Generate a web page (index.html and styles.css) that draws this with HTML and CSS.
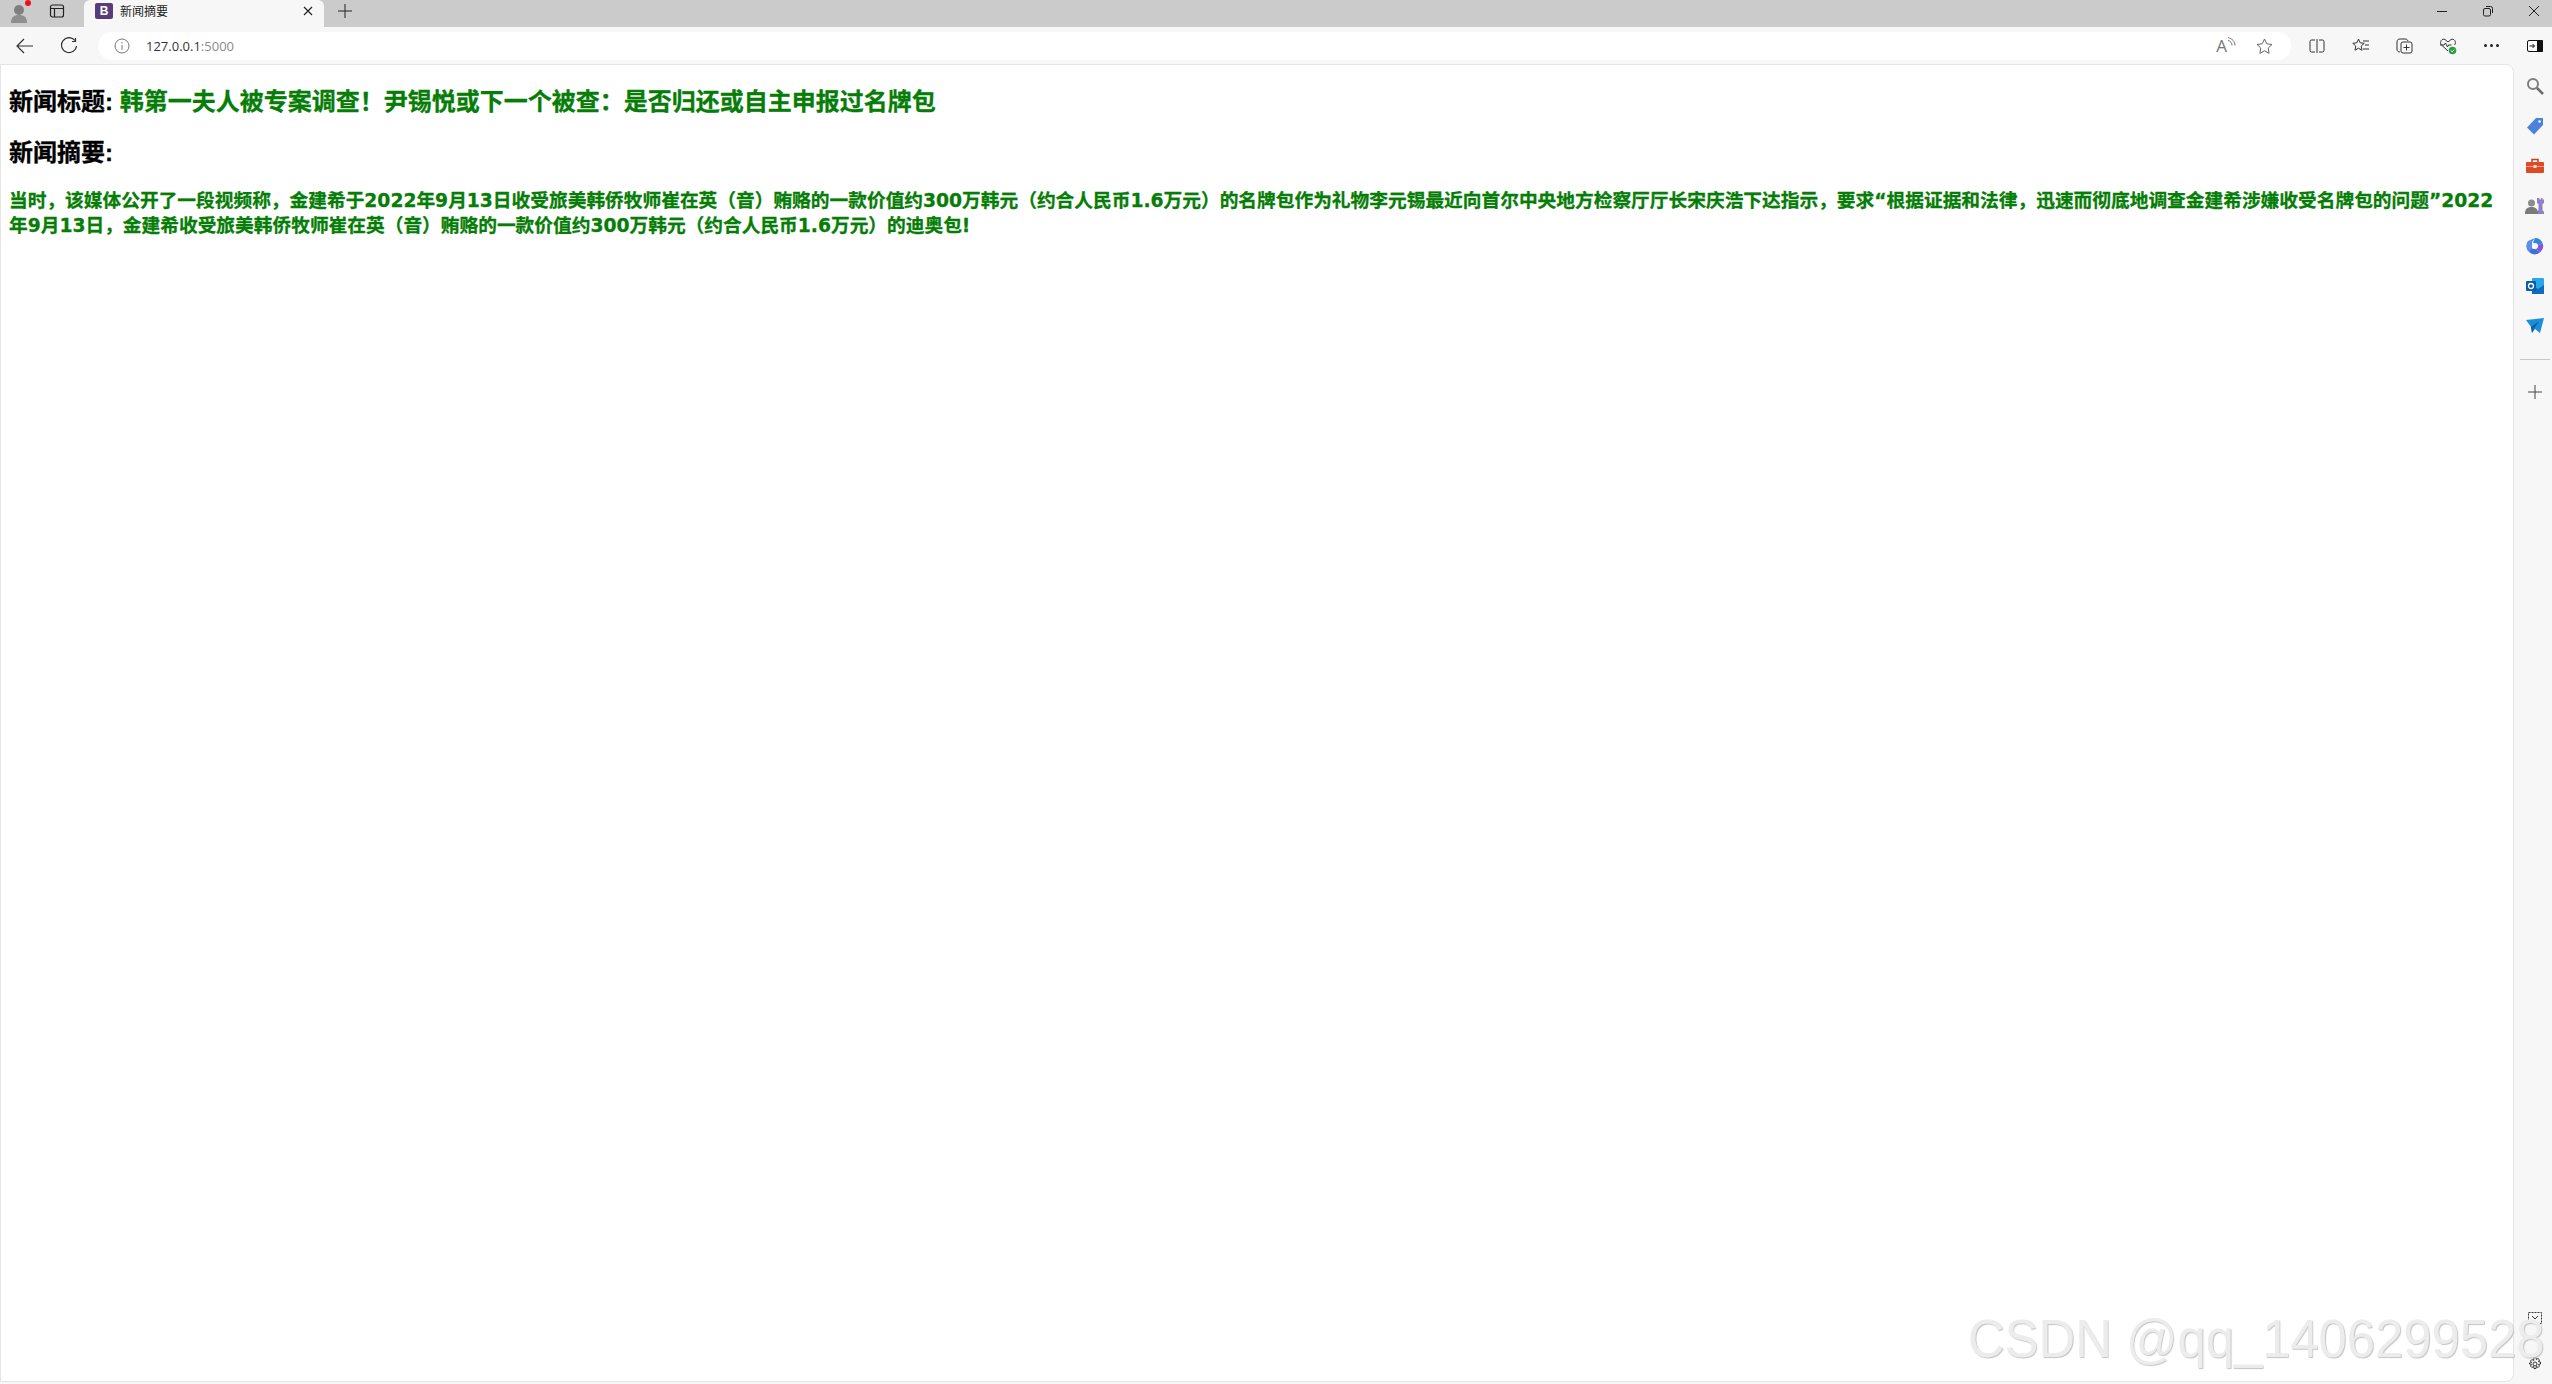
FILE: index.html
```html
<!DOCTYPE html>
<html lang="zh-CN">
<head>
  <meta charset="UTF-8" />
  <meta name="viewport" content="width=device-width, initial-scale=1.0" />
  <title>新闻摘要</title>
  <link rel="stylesheet" href="styles.css">
</head>
<body>
  <div class="browser">
    <div class="tabbar">
      <div class="tabbar-left">
        <div class="profile">
          <svg width="24" height="24" viewBox="0 0 24 24"><circle cx="10" cy="10" r="5" fill="#7f7f7f"/><path d="M2 23c0-6 3-8 8-8s8 2 8 8z" fill="#8e8e8e"/><circle cx="19" cy="3" r="3" fill="#e81123"/></svg>
        </div>
        <div class="tab-action">
          <svg width="16" height="16" viewBox="0 0 16 16" fill="none" stroke="#222" stroke-width="1.2"><rect x="1.5" y="2" width="13" height="12" rx="2"/><path d="M1.5 5.5h13M5.5 5.5V14"/></svg>
        </div>
        <div class="tab">
          <span class="favicon">B</span>
          <span class="tab-title">新闻摘要</span>
          <svg class="tab-close" width="10" height="10" viewBox="0 0 10 10" stroke="#222" stroke-width="1.2"><path d="M1 1l8 8M9 1l-8 8"/></svg>
        </div>
        <div class="new-tab">
          <svg width="14" height="14" viewBox="0 0 14 14" stroke="#222" stroke-width="1"><path d="M7 0v14M0 7h14"/></svg>
        </div>
      </div>
      <div class="window-btns">
        <svg width="12" height="12" viewBox="0 0 12 12" stroke="#222"><path d="M1 6.5h10"/></svg>
        <svg width="12" height="12" viewBox="0 0 12 12" fill="none" stroke="#222"><rect x="1.5" y="3.5" width="7" height="7.5" rx="1.5"/><path d="M4 1.5h4.5a2 2 0 0 1 2 2V8"/></svg>
        <svg width="12" height="12" viewBox="0 0 12 12" stroke="#222"><path d="M1 1l10 10M11 1L1 11"/></svg>
      </div>
    </div>

    <div class="toolbar">
      <div class="nav-btn">
        <svg width="18" height="16" viewBox="0 0 18 16" fill="none" stroke="#333" stroke-width="1.2"><path d="M17 8H1M8 1L1 8l7 7"/></svg>
      </div>
      <div class="nav-btn">
        <svg width="18" height="18" viewBox="0 0 18 18" fill="none" stroke="#333" stroke-width="1.2"><path d="M15 3.5A7.5 7.5 0 1 0 16.5 9M15.5 1v3.5H12"/></svg>
      </div>
      <div class="address">
        <svg class="info" width="16" height="16" viewBox="0 0 16 16" fill="none" stroke="#777"><circle cx="8" cy="8" r="7"/><path d="M8 7v5M8 4v1.5"/></svg>
        <span class="url">127.0.0.1<span class="port">:5000</span></span>
        <div class="address-right">
          <span class="read-aloud">A<svg width="9" height="11" viewBox="0 0 9 11" fill="none" stroke="#777"><path d="M1 .5c4 1 7 4 7 8M1 3.500c2.500.5 4 2.500 4 5"/></svg></span>
          <svg width="17" height="16" viewBox="0 0 17 16" fill="none" stroke="#666"><path d="M8.5 1l2.3 4.8 5.2.7-3.8 3.6.9 5.2-4.6-2.5-4.6 2.5.9-5.2L1 6.500l5.200-.7z"/></svg>
        </div>
      </div>
      <div class="tools">
        <div class="tool"><svg width="16" height="14" viewBox="0 0 16 14" fill="none" stroke="#333"><path d="M6 1H2.500A1.500 1.500 0 0 0 1 2.500v9A1.500 1.500 0 0 0 2.500 13H6M10 1h3.500A1.500 1.500 0 0 1 15 2.500v9a1.500 1.500 0 0 1-1.500 1.500H10M8 0v14"/></svg></div>
        <div class="tool"><svg width="18" height="16" viewBox="0 0 18 16" fill="none" stroke="#333"><path d="M6.500 1l1.700 3.800 4 .5-3 2.800.8 4.100-3.500-2-3.500 2 .8-4.100-3-2.800 4-.5zM11 3h6M13 7h4M11 11h6"/></svg></div>
        <div class="tool"><svg width="18" height="17" viewBox="0 0 18 17" fill="none" stroke="#333"><path d="M5 15c-2 0-3-1-3-3V5c0-2 1-3 3-3h5c1.500 0 2.500.5 3 2"/><rect x="6" y="5" width="11" height="11" rx="2"/><path d="M11.500 7.500v6M8.500 10.500h6"/></svg></div>
        <div class="tool"><svg width="18" height="18" viewBox="0 0 18 18" fill="none" stroke="#333"><path d="M9 14L2.500 8C0 5 3 1 6 2.500L9 5l3-2.500C15 1 18 5 15.500 8"/><path d="M1 8h4l1.500-2 2 4 1-2h3"/><circle cx="13.500" cy="13.500" r="3.800" fill="#2ea043" stroke="none"/><path d="M11.800 13.500l1.300 1.300 2.200-2.200" stroke="#fff"/></svg></div>
        <div class="tool dots"><i></i><i></i><i></i></div>
        <div class="tool"><svg width="16" height="12" viewBox="0 0 16 12"><rect x=".5" y=".5" width="15" height="11" rx="1.500" fill="#fff" stroke="#111"/><rect x="10" y="0" width="6" height="12" rx="1" fill="#111"/><path d="M2.500 6h5M5.500 4l2 2-2 2" fill="none" stroke="#111"/></svg></div>
      </div>
    </div>

    <div class="main">
      <div class="page">
        <h2 class="headline">新闻标题: <span class="green">韩第一夫人被专案调查&#xFF01;尹锡悦或下一个被查&#xFF1A;是否归还或自主申报过名牌包</span></h2>
        <h2 class="summary-label">新闻摘要:</h2>
        <h3 class="summary green">当时&#xFF0C;该媒体公开了一段视频称&#xFF0C;金建希于2022年9月13日收受旅美韩侨牧师崔在英&#xFF08;音&#xFF09;贿赂的一款价值约300万韩元&#xFF08;约合人民币1.6万元&#xFF09;的名牌包作为礼物李元锡最近向首尔中央地方检察厅厅长宋庆浩下达指示&#xFF0C;要求“根据证据和法律&#xFF0C;迅速而彻底地调查金建希涉嫌收受名牌包的问题”2022年9月13日&#xFF0C;金建希收受旅美韩侨牧师崔在英&#xFF08;音&#xFF09;贿赂的一款价值约300万韩元&#xFF08;约合人民币1.6万元&#xFF09;的迪奥包!</h3>
      </div>

      <div class="sidebar">
        <div class="side-icon"><svg width="18" height="18" viewBox="0 0 18 18" fill="none"><circle cx="7" cy="7" r="5" stroke="#7d7d7d" stroke-width="2"/><path d="M11 11l6 6" stroke="#6a6a6a" stroke-width="2.500"/></svg></div>
        <div class="side-icon"><svg width="18" height="18" viewBox="0 0 18 18"><path d="M10 1h7v7l-9 9.500L1 10.500z" fill="#4c82dc"/><circle cx="13.500" cy="4.500" r="1.300" fill="#fff"/></svg></div>
        <div class="side-icon"><svg width="18" height="16" viewBox="0 0 18 16"><path d="M6 4V1.500h6V4" fill="none" stroke="#c9401f" stroke-width="1.500"/><rect y="4" width="18" height="11" rx="1" fill="#dc4a26"/><rect y="8" width="18" height="1" fill="#f2a081"/><rect x="7.500" y="7" width="3" height="3" fill="#fbe2d0"/></svg></div>
        <div class="side-icon"><svg width="20" height="18" viewBox="0 0 20 18"><path d="M13 1h1.500v1.500H16V1h1.500v1.500H19V6l-1.500 1v6l1.500 2v2h-7v-2l1.500-2V7L12 6V1z" fill="#8f7fc4"/><circle cx="6.500" cy="6" r="3.500" fill="#8c8c8c"/><path d="M0 17c0-5 2-7 6.500-7s6.500 2 6.500 7z" fill="#7a7a7a"/></svg></div>
        <div class="side-icon"><svg width="18" height="18" viewBox="0 0 18 18" fill="none"><path d="M9 1a8 8 0 0 1 7.500 5L12 8.500 7 5.500z" fill="#2f88de"/><path d="M16.500 6a8 8 0 0 1-2 9L9 12l3-3.500z" fill="#8c52d4"/><path d="M14.500 15A8 8 0 0 1 3 15l1-4 5 1z" fill="#3f6fd8"/><path d="M3 15A8 8 0 0 1 2 4l7-3-3 4v6z" fill="#5c8fe6"/><circle cx="9" cy="9" r="3" fill="#f7f7f7"/></svg></div>
        <div class="side-icon"><svg width="18" height="18" viewBox="0 0 18 18"><rect x="6" y="1" width="12" height="15" rx="1" fill="#28a8ea"/><path d="M6 8l6 4 6-4v9H6z" fill="#0f6cbd"/><rect y="4" width="10" height="10" rx="1" fill="#0a5ea8"/><circle cx="5" cy="9" r="2.500" fill="none" stroke="#fff" stroke-width="1.300"/></svg></div>
        <div class="side-icon"><svg width="18" height="16" viewBox="0 0 18 16"><path d="M0 2l18-2-4 15-5-4-3 4-1-6z" fill="#1a8fd8"/><path d="M5 9l8-6-5 8-2 4z" fill="#0b5fa5"/></svg></div>
        <div class="side-divider"></div>
        <div class="side-plus"><svg width="14" height="14" viewBox="0 0 14 14" stroke="#444"><path d="M7 0v14M0 7h14"/></svg></div>
        <div class="side-bottom">
          <svg width="14" height="12" viewBox="0 0 14 12" fill="none" stroke="#333" stroke-dasharray="2 1"><rect x=".5" y=".5" width="13" height="11"/><path d="M4 4l3 3 3-3" stroke-dasharray="none"/></svg>
          <svg width="14" height="14" viewBox="0 0 14 14" fill="none" stroke="#333"><circle cx="7" cy="7" r="2"/><path d="M6 .5h2l.4 2 1.700-1 1.400 1.400-1 1.700 2 .4v2l-2 .4 1 1.700-1.400 1.400-1.700-1-.4 2H6l-.4-2-1.700 1-1.400-1.400 1-1.700-2-.4V6l2-.4-1-1.700 1.400-1.400 1.700 1z"/></svg>
        </div>
      </div>
    </div>

    <div class="watermark">CSDN @qq_1406299528</div>
  </div>
</body>
</html>
```

FILE: styles.css
```css
* {
  box-sizing: border-box;
}
html, body {
  height: 100%;
}
body {
  margin: 0;
  overflow: hidden;
  background: #fff;
  font-family: "Open Sans", "Noto Sans CJK SC", sans-serif;
}
.browser {
  position: relative;
  display: flex;
  flex-direction: column;
  height: 100%;
  overflow: hidden;
}

/* tab strip */
.tabbar {
  display: flex;
  justify-content: space-between;
  height: 27px;
  background: #cbcbcb;
}
.tabbar-left {
  display: flex;
  align-items: center;
}
.profile, .tab-action, .new-tab {
  display: flex;
  align-items: center;
  justify-content: center;
}
.profile {
  width: 38px;
  height: 27px;
  padding: 0 0 4px 4px;
}
.tab-action {
  width: 38px;
  height: 27px;
  padding-bottom: 5px;
}
.tab {
  display: flex;
  align-items: center;
  width: 240px;
  height: 27px;
  margin-left: 8px;
  padding: 0 11px 5px;
  background: #f7f7f7;
  border-radius: 6px 6px 0 0;
}
.favicon {
  width: 18px;
  height: 16px;
  border-radius: 2px;
  background: #563d7c;
  color: #fff;
  font: bold 12px/16px "Liberation Sans", sans-serif;
  text-align: center;
}
.tab-title {
  margin-left: 7px;
  font-size: 12px;
  color: #222;
}
.tab-close {
  margin-left: auto;
}
.new-tab {
  width: 42px;
  height: 27px;
  padding-bottom: 5px;
}
.window-btns {
  display: flex;
  align-items: center;
  gap: 34px;
  padding: 0 12px 5px 0;
}

/* address row */
.toolbar {
  display: flex;
  align-items: center;
  height: 37px;
  padding-left: 3px;
  background: #f7f7f7;
}
.nav-btn {
  display: flex;
  align-items: center;
  justify-content: center;
  width: 44px;
}
.address {
  display: flex;
  align-items: center;
  flex: 1;
  height: 28px;
  margin-left: 7px;
  margin-right: 11px;
  padding: 0 14px 0 16px;
  background: #fff;
  border-radius: 14px;
}
.url {
  margin-left: 16px;
  font-size: 13px;
  color: #333;
}
.port {
  color: #8a8a8a;
}
.address-right {
  display: flex;
  align-items: center;
  gap: 20px;
  margin-left: auto;
  padding-right: 4px;
}
.read-aloud {
  display: flex;
  align-items: flex-start;
  font-size: 17px;
  line-height: 18px;
  color: #777;
}
.tools {
  display: flex;
  align-items: center;
  gap: 13.6px;
  padding-right: 2px;
}
.tool {
  display: flex;
  align-items: center;
  justify-content: center;
  width: 30px;
}
.dots {
  gap: 3px;
}
.dots i {
  width: 3px;
  height: 3px;
  background: #222;
  border-radius: 50%;
}

/* page + sidebar */
.main {
  display: flex;
  flex: 1;
  min-height: 0;
  background: #f7f7f7;
}
.page {
  flex: 1;
  min-width: 0;
  margin-bottom: 2px;
  padding: 22px 9px 0 8px;
  background: #fff;
  border: 1px solid #e4e4e4;
  border-radius: 0 8px 8px 0;
  font-family: "DejaVu Sans", "Noto Sans CJK SC", sans-serif;
}
.page h2, .page h3 {
  margin: 0;
  font-weight: bold;
  color: #000;
  -webkit-text-stroke: .3px;
}
.page h2 {
  font-family: "Liberation Sans", "Noto Sans CJK SC", sans-serif;
  font-size: 24px;
  line-height: 30px;
}
.page .summary-label {
  margin-top: 21px;
}
.page .summary {
  margin-top: 20px;
  font-size: 18.720px;
  line-height: 25px;
}
.page .green {
  color: #067d06;
}
.sidebar {
  display: flex;
  flex-direction: column;
  align-items: center;
  width: 38px;
  padding: 2px 0 0 3px;
}
.side-icon {
  display: flex;
  align-items: center;
  justify-content: center;
  height: 40px;
}
.side-divider {
  width: 30px;
  height: 1px;
  margin-top: 13px;
  background: #c8c8c8;
}
.side-plus {
  display: flex;
  margin-top: 25px;
}
.side-bottom {
  display: flex;
  flex-direction: column;
  align-items: center;
  gap: 33px;
  margin-top: auto;
  padding-bottom: 13px;
}

.watermark {
  position: absolute;
  left: 1968px;
  bottom: 15px;
  font: 54px/62px "Liberation Sans", sans-serif;
  white-space: nowrap;
  color: #ececec;
  text-shadow: 1px 1px 1px #c4c4c4;
  transform: scaleX(.94);
  transform-origin: left center;
}
```
